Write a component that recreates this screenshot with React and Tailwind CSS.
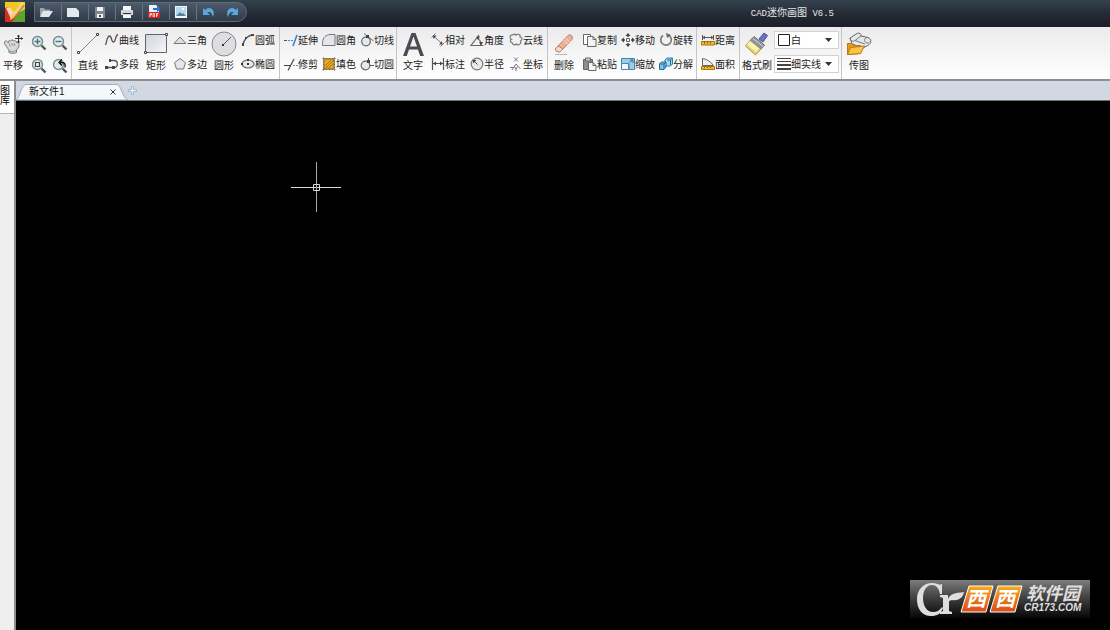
import { useState } from 'react';

const font = "font-['Liberation_Sans','Noto_Sans_CJK_SC',sans-serif]";

function Svg({ w = 14, h = 14, children }) {
  return (
    <svg
      width={w}
      height={h}
      viewBox={`0 0 ${w} ${h}`}
      fill="none"
      stroke="#666"
      strokeWidth="1"
      className="shrink-0"
      aria-hidden="true"
    >
      {children}
    </svg>
  );
}

function Magnifier({ children }) {
  return (
    <Svg w={16} h={16}>
      <path d="M10.5 10.5l4 4" stroke="#555" strokeWidth="2.4" />
      <circle cx="6.5" cy="6.5" r="5" fill="#dcecef" stroke="#7b8a8e" strokeWidth="1.4" />
      {children}
    </Svg>
  );
}

const icons = {
  pan: (
    <Svg w={20} h={20}>
      <path d="M1.500 8c1-2 3-1 4 1C5 7 6 6 7.500 7 8 5.500 10 5.500 10.500 7c1.500-1 3 0 3 1.500 1.500-.5 2.500.5 2.500 2 0 3-1.500 4.500-2.500 5.500v2.500c-2.500 1.200-5.500 1-7.500 0V17c-1-2-1.500-3.500-3-5-1-1-1.500-2.500-1.500-4z" fill="#d5dada" stroke="#777" />
      <path d="M6 9.500l1.500 3M8.500 9l1.500 3M11 9l1 3M6.500 17c2 .8 4.500.8 6.500-.5" stroke="#909797" />
      <path d="M15.500 1v7.500M12 4.500h7.500M14.500 2.500l1-1.500 1 1.500M18 3.500l1.500 1-1.500 1M14.500 7.500l1 1.500 1-1.500" stroke="#333" />
    </Svg>
  ),
  zoomIn: <Magnifier><path d="M6.500 3.500v6M3.500 6.500h6" stroke="#4a7683" strokeWidth="1.4" /></Magnifier>,
  zoomOut: <Magnifier><path d="M3.500 6.500h6" stroke="#4a7683" strokeWidth="1.4" /></Magnifier>,
  zoomWindow: <Magnifier><path d="M4.500 4.500h4v4h-4z" stroke="#444" strokeWidth="1.2" /></Magnifier>,
  zoomBack: <Magnifier><path d="M8 4.500h2c3 0 3.500 2 3 5M10 1.500L7 4.500l3 3" stroke="#111" strokeWidth="1.4" /></Magnifier>,
  line: (
    <Svg w={24} h={24}>
      <path d="M3 21L21 3" stroke="#888" />
      <path d="M1.500 19.500h2v2h-2zM20.500 1.500h2v2h-2z" fill="#fff" stroke="#444" />
    </Svg>
  ),
  curve: <Svg><path d="M.5 12C2 8 2 3 4.500 3S6 9 8.500 9 10 2 13 1.500" stroke="#555" strokeWidth="1.300" /></Svg>,
  polyline: (
    <Svg>
      <path d="M5 3.500h4c4.500 0 4.500 7 0 7H1" stroke="#555" strokeWidth="1.300" />
      <path d="M0 9h3v3H0zM7 9h3v3H7zM4 2h2v3H4z" fill="#444" stroke="none" />
    </Svg>
  ),
  rect: (
    <Svg w={24} h={22}>
      <defs>
        <linearGradient id="rectFill" x1="0" y1="0" x2="1" y2="1">
          <stop offset="0" stopColor="#cfd4dd" />
          <stop offset="1" stopColor="#f4f6f9" />
        </linearGradient>
      </defs>
      <path d="M1.500 1.500h21v18h-21z" fill="url(#rectFill)" stroke="#666" />
      <path d="M.5 18.500h2v2h-2zM21.500.500h2v2h-2z" fill="#fff" stroke="#444" />
    </Svg>
  ),
  triangle: <Svg><path d="M1 10.500h12L7 4z" fill="#dde1e6" stroke="#777" /></Svg>,
  polygon: <Svg><path d="M7 1.500l5.500 4.200-2 6.300h-7l-2-6.300z" fill="#e3e6ea" stroke="#777" /></Svg>,
  circle: (
    <Svg w={26} h={26}>
      <circle cx="13" cy="13" r="12" fill="#dcdee1" stroke="#888" />
      <path d="M12 14l8-8" stroke="#555" />
      <path d="M11 13h2v2h-2z" fill="#333" stroke="none" />
    </Svg>
  ),
  arc: (
    <Svg>
      <path d="M2 12C3 6 7 2 12 2" stroke="#555" strokeWidth="1.300" />
      <path d="M1 10h2v3H1zM10 1h3v2h-3zM4 4h2v2H4z" fill="#444" stroke="none" />
    </Svg>
  ),
  ellipse: (
    <Svg>
      <ellipse cx="7" cy="7" rx="6" ry="4" fill="#e6e8eb" strokeWidth="1.200" />
      <path d="M6 6h2v2H6zM6 2h2v2H6zM0 6h2v2H0z" fill="#333" stroke="none" />
    </Svg>
  ),
  extend: (
    <Svg>
      <path d="M0 7.500h3" stroke="#555" />
      <path d="M4 7.500h5" stroke="#3f8fd8" strokeDasharray="2 1" />
      <path d="M9 13L13 2" stroke="#2b83d6" strokeWidth="1.500" />
    </Svg>
  ),
  trim: (
    <Svg>
      <path d="M0 8.500h6M4 13.500L10 2" stroke="#444" strokeWidth="1.200" />
      <path d="M9 8.500h5" stroke="#888" strokeDasharray="2 1" />
    </Svg>
  ),
  fillet: <Svg><path d="M.5 12.500V9.500C1 4 4 2 8 1.500h5v11z" fill="#e3e6ea" stroke="#777" /></Svg>,
  fill: (
    <Svg>
      <path d="M2 2h10v10H2z" fill="#e8a91f" stroke="#9a7018" />
      <path d="M3 9l6-6M3 12l9-9M6 12l6-6" stroke="#a3761a" />
      <path d="M.5 1.500h13M.5 12.500h13M1.500.500v13M12.500.500v13" stroke="#666" strokeDasharray="2 1" />
    </Svg>
  ),
  tangentLine: (
    <Svg>
      <circle cx="6" cy="8.500" r="4.300" fill="#e6e9ec" stroke="#666" strokeWidth="1.200" />
      <path d="M4 .5l9.500 7.500" stroke="#666" />
      <path d="M6 2h3v3H6z" fill="#444" stroke="none" />
    </Svg>
  ),
  tangentCircle: (
    <Svg>
      <circle cx="5.500" cy="8.500" r="4.300" fill="#e6e9ec" stroke="#666" strokeWidth="1.200" />
      <path d="M8.500 1v5M10 8.500h4" stroke="#555" />
      <path d="M7 3h3v3H7z" fill="#444" stroke="none" />
    </Svg>
  ),
  text: (
    <Svg w={22} h={26}>
      <path d="M1 25L9.500 2h4L22 25h-3.800l-2.300-6.500H7L4.800 25zM8 15.500h7L11.500 5.500z" fill="#4a4d52" stroke="none" />
    </Svg>
  ),
  relative: (
    <Svg>
      <path d="M.5 4.500l4-4M9.500 13.500l4-4M3 3.500l8 7" stroke="#777" />
      <path d="M2 2.500h3.500L2.500 6zM11.500 11.500H8l3-3.500z" fill="#444" stroke="none" />
    </Svg>
  ),
  dimension: (
    <Svg>
      <path d="M1.500 1v12M12.500 1v12M2 6.500h10" stroke="#555" strokeWidth="1.200" />
      <path d="M2 6.500l3-2v4zM12 6.500l-3-2v4z" fill="#444" stroke="none" />
    </Svg>
  ),
  angle: (
    <Svg>
      <path d="M13.500 12.500H1L9 2M7 5c2 1 4 4 4 7" stroke="#666" strokeWidth="1.200" />
      <path d="M6.500 3.500h3.500L8 7zM9 9h4l-2 3.500z" fill="#444" stroke="none" />
    </Svg>
  ),
  radius: (
    <Svg>
      <circle cx="7" cy="7" r="5.800" fill="#e9eaec" stroke="#777" strokeWidth="1.200" />
      <path d="M3.500 3.500l4 4" stroke="#444" />
      <path d="M3 3h3.500L3 6.500z" fill="#444" stroke="none" />
    </Svg>
  ),
  cloud: (
    <Svg>
      <path d="M4 2c1-1.500 3-1 3 0 2-1.500 5-.5 4 2 2.500 0 2.500 3 .500 4 1 3-2 5-4 3-1.500 1.500-4 1-4-1C1 10 1 7 2.500 6.500 0 5 1 1.500 4 2z" fill="#f0f1f3" stroke="#777" strokeWidth="1.200" />
    </Svg>
  ),
  coordinate: (
    <Svg>
      <path d="M5 .5l4 4M9 .5l-4 4M1 10.500h4M3 13l4-6 4.500 5M5.500 9.500L7 12v2M8.500 9.500L7 12" stroke="#777" />
    </Svg>
  ),
  erase: (
    <Svg w={22} h={24}>
      <path d="M3 16L15 3.500c2-2 6 1 4 4L8 19c-2 2-7 0-5-3z" fill="#e9b096" stroke="#b98370" />
      <path d="M3 16l2-2 5 3-2 2c-2 2-7 0-5-3z" fill="#f4ddd0" stroke="#b98370" />
      <path d="M10.500 8.500l4.500 3.500M12.500 6.500l4.500 3.500" stroke="#f8ded1" />
      <path d="M2 22.500h12" stroke="#b5b5b5" />
    </Svg>
  ),
  copy: (
    <Svg>
      <path d="M.5 1.500h7v10h-7z" fill="#fff" />
      <path d="M4.500 3.500h5.500l3 3v7H4.500z" fill="#f3f4f6" />
      <path d="M10 3.500v3h3" />
    </Svg>
  ),
  paste: (
    <Svg>
      <path d="M.5 2.500h9v10h-9z" fill="#8d8d8d" />
      <path d="M2.500 1h5v3h-5z" fill="#ccc" />
      <path d="M5.500 5.500H10L13 8.500v5H5.500z" fill="#f5f5f5" />
      <path d="M10 5.500v3h3" />
    </Svg>
  ),
  move: (
    <Svg>
      <path d="M7 2v2M7 10v2M2 7h2M10 7h2" stroke="#444" strokeWidth="1.500" />
      <path d="M5.500 5.500h3v3h-3z" />
      <path d="M7 0l2.500 3h-5zM7 14l2.500-3h-5zM0 7l3-2.500v5zM14 7l-3-2.500v5z" fill="#444" stroke="none" />
    </Svg>
  ),
  scale: (
    <Svg>
      <path d="M.5 1.500h13v11H8V6.500H.5z" fill="#9fcde3" stroke="#3f86ab" />
      <path d="M.5 6.500h7v6h-7z" fill="#f1f8fb" stroke="#4a88a8" />
      <path d="M8.500 5.500l3-2.500M9 3h3v3" stroke="#2b729b" />
    </Svg>
  ),
  rotate: (
    <Svg>
      <path d="M4 2.500A5.300 5.300 0 1 0 10.500 2.800" stroke="#777" strokeWidth="1.600" />
      <path d="M7 0l1 5 4-3z" fill="#666" stroke="none" />
    </Svg>
  ),
  explode: (
    <Svg>
      <path d="M6 3l2-2h5.500v6l-2 2H6z" fill="#a8d8ef" stroke="#2b7fae" />
      <path d="M.5 7l2-2H7v5l-2 2.500H.5z" fill="#7cc1e6" stroke="#226f9e" />
      <path d="M.5 7H5v5M5 7l2-2M8 3h3.500v5M11.500 3l2-2" stroke="#226f9e" />
    </Svg>
  ),
  distance: (
    <Svg>
      <path d="M1 4.500h12M1.500 2v5M12.500 2v5M4 3L2 4.500 4 6M10 3l2 1.500L10 6" stroke="#555" />
      <path d="M.5 8.500h13v3.500H.500z" fill="#f3b82d" stroke="#a87510" />
      <path d="M3.500 9v1.500M6.500 9v1.500M9.500 9v1.500" stroke="#7a560f" />
    </Svg>
  ),
  area: (
    <Svg>
      <path d="M1.500 8.500v-7C6 2 10 5 12.500 8.500z" fill="#eceef1" />
      <path d="M.5 9.500h13v3H.500z" fill="#f3b82d" stroke="#a87510" />
      <path d="M3.500 10v1M6.500 10v1M9.500 10v1" stroke="#7a560f" />
    </Svg>
  ),
  brush: (
    <Svg w={24} h={24}>
      <path d="M14 7l5-6 3.500 2.500L18 10z" fill="#6a72c4" stroke="#4c5596" />
      <path d="M9 4.500L19.500 13 16 17 5 8.500z" fill="#8f949c" stroke="#6b6f76" />
      <path d="M8 6.500L18 14.500" stroke="#d5d8dd" />
      <path d="M5 8.500L16 17l-5.500 6L.5 14z" fill="#ead65f" stroke="#a79a4f" />
      <path d="M5 9l9 7.500-3 3.500-9-7.500z" fill="#f8f2bd" stroke="none" />
    </Svg>
  ),
  transfer: (
    <Svg w={26} h={24}>
      <path d="M4 6l7-4.500c2-1 4.500 0 4 2.500l7 1.500c4 1.500 3.500 6 .5 7.500L17 16 6 12z" fill="#e6e9ec" stroke="#666" />
      <path d="M4 6c0 3 3 4 5 2.500L15 4M22 5.500c-3 0-4 2-3 4s3 2 4.500.5M9 8.500L19 12" stroke="#777" />
      <path d="M1.500 11.500h4l2 2h7v8l-13 1z" fill="#e79a16" stroke="#b67a17" />
      <path d="M4.500 15.500L18.500 14l-4 7.500-13 1z" fill="#fbc443" stroke="#b67a17" />
    </Svg>
  ),
};

const quickActions = [
  ['打开', <><path d="M1 11V3h4l1 1.500h5V6" fill="#9aa3ad" /><path d="M1 12l3-6h10l-4 6z" fill="#dfe5e9" /></>],
  ['新建', <path d="M1 3h9l3 3v6H1z" fill="#e4e9ed" />],
  ['保存', <><path d="M2 2h10v11H2z" fill="#7f8890" /><path d="M4 2h6v4H4zM4 9h6v4H4z" fill="#eef2f5" /><path d="M6 10h2v2H6z" fill="#444" /></>],
  ['打印', <><path d="M3 1h8v4H3zM3 9h8v4H3z" fill="#f4f6f8" /><path d="M1 5h12v5H1z" fill="#cfd5da" /><path d="M3 8h8v1H3z" fill="#333" /></>],
  ['PDF', <><path d="M2 0h7l3 3v10H2z" fill="#edf1f5" /><path d="M6 3h4V1l4 3-4 3V5H6z" fill="#2576c9" /><path d="M1 7h12v6H1z" fill="#cf2823" /><path d="M3 12V8.500h1.500v1.500H3M6 8.500v3h1.500v-3zM9.500 12V8.500h2M9.500 10h1.500" stroke="#fff" strokeWidth=".8" /></>],
  ['图片', <><path d="M1 1h12v12H1z" fill="#f2f6f9" /><path d="M2 2h10v9H2z" fill="#b5d9ea" /><path d="M2 11l4-4 2 2 1-1 3 3z" fill="#577e97" /><path d="M8 3h2v2H8z" fill="#fff" /></>],
  ['撤销', <path d="M1 3v7h7L5.500 7.500C8 6 10 8 11 12c2-5 0-9-4-9-2 0-3 1-4 2z" fill="#5aa7dc" />],
  ['重做', <path d="M13 3v7H6l2.500-2.500C6 6 4 8 3 12 1 7 3 3 7 3c2 0 3 1 4 2z" fill="#5aa7dc" />],
];

function BigButton({ icon, label }) {
  return (
    <button className="flex w-8 shrink-0 flex-col items-center">
      <span className="flex h-8 items-center">{icons[icon]}</span>
      <span className="h-4 text-[10px] leading-3 whitespace-nowrap">{label}</span>
    </button>
  );
}

function SmallButtons({ items }) {
  return (
    <div className="flex shrink-0 flex-col">
      {items.map(([icon, label]) => (
        <button key={icon} className="flex h-6 items-center text-[10px] whitespace-nowrap">
          {icons[icon]}
          {label}
        </button>
      ))}
    </div>
  );
}

function Group({ className = '', children }) {
  return (
    <div className={`flex shrink-0 border-r border-[#c4c4c4] pt-px ${className}`}>{children}</div>
  );
}

function IconSelect({ label, value, onChange, options, children }) {
  return (
    <label className="relative flex h-[18px] w-[65px] items-center border border-[#d2d2d2] bg-white">
      <span className="pointer-events-none absolute left-0.5">{children}</span>
      <select
        aria-label={label}
        value={value}
        onChange={(e) => onChange(e.target.value)}
        className="h-4 w-full appearance-none bg-transparent pl-4 text-[10px] outline-none"
      >
        {options.map((o) => (
          <option key={o}>{o}</option>
        ))}
      </select>
      <svg width="7" height="4" className="pointer-events-none absolute right-1.5" aria-hidden="true">
        <path d="M0 0h7L3.500 4z" fill="#333" />
      </svg>
    </label>
  );
}

function TitleBar() {
  return (
    <header className="flex h-[27px] items-start bg-linear-to-b from-[#33434d] via-[#252b36] to-[#1b1d28]">
      <svg width="20" height="20" viewBox="0 0 20 20" className="mt-0.5 ml-[5px]" aria-hidden="true">
        <path d="M0 0h20v20H0z" fill="#d92c1f" />
        <path d="M0 0h20v5L9 13 4 5 0 6z" fill="#f4c51f" />
        <path d="M20 4v16H7z" fill="#5aa52c" />
        <path d="M13 0h7v7l-5 3z" fill="#e8d83a" />
        <path d="M1 6l4-1 4 6-3 6z" fill="#f3d9b8" />
        <path d="M17 1l3 3L9 16l-4 2 1-5z" fill="#f6d08c" />
        <path d="M18.500 2.500L20 4 9 16l-2 1z" fill="#cf8a3c" />
      </svg>
      <div className="mt-0.5 ml-[9px] flex h-5 w-[213px] items-center rounded-r-full border border-[#5d6b7a] bg-linear-to-b from-[#4d5b6b] to-[#313b49]">
        {quickActions.map(([label, drawing], i) => (
          <button
            key={label}
            aria-label={label}
            className={`flex h-4 items-center ${i < 6 ? 'w-[27px] border-r border-[#68737f] pl-1' : 'w-[23px] justify-center'}`}
          >
            <svg width="14" height="14" viewBox="0 0 14 14" fill="none" aria-hidden="true">
              {drawing}
            </svg>
          </button>
        ))}
      </div>
      <h1 className="mt-[7px] mr-[276px] ml-auto text-[10px] leading-3 text-[#e4e7ea]">
        <span className="font-['Liberation_Mono',monospace] text-[9px]">CAD</span>
        迷你画图
        <span className="font-['Liberation_Mono',monospace] text-[9px]"> V6.5</span>
      </h1>
    </header>
  );
}

function Toolbar() {
  const [color, setColor] = useState('白');
  const [lineType, setLineType] = useState('细实线');

  return (
    <nav className="flex h-[54px] border-b-2 border-[#8b8e92] bg-linear-to-b from-[#ebebeb] to-white text-[#222]">
      <Group className="w-[72px]">
        <div className="-ml-[3px] flex">
          <BigButton icon="pan" label="平移" />
        </div>
        <div className="grid grid-cols-2 content-start gap-x-[5px] pl-0.5">
          {['zoomIn', 'zoomOut', 'zoomWindow', 'zoomBack'].map((name) => (
            <button key={name} aria-label={name} className="flex h-[23px] items-end">
              {icons[name]}
            </button>
          ))}
        </div>
      </Group>
      <Group className="w-[208px] gap-px">
        <BigButton icon="line" label="直线" />
        <SmallButtons items={[['curve', '曲线'], ['polyline', '多段']]} />
        <BigButton icon="rect" label="矩形" />
        <SmallButtons items={[['triangle', '三角'], ['polygon', '多边']]} />
        <BigButton icon="circle" label="圆形" />
        <SmallButtons items={[['arc', '圆弧'], ['ellipse', '椭圆']]} />
      </Group>
      <Group className="w-[117px] gap-1 pl-1">
        <SmallButtons items={[['extend', '延伸'], ['trim', '修剪']]} />
        <SmallButtons items={[['fillet', '圆角'], ['fill', '填色']]} />
        <SmallButtons items={[['tangentLine', '切线'], ['tangentCircle', '切圆']]} />
      </Group>
      <Group className="w-[151px]">
        <BigButton icon="text" label="文字" />
        <div className="flex gap-[5px] pl-0.5">
          <SmallButtons items={[['relative', '相对'], ['dimension', '标注']]} />
          <SmallButtons items={[['angle', '角度'], ['radius', '半径']]} />
          <SmallButtons items={[['cloud', '云线'], ['coordinate', '坐标']]} />
        </div>
      </Group>
      <Group className="w-[149px]">
        <BigButton icon="erase" label="删除" />
        <div className="flex gap-1 pl-[3px]">
          <SmallButtons items={[['copy', '复制'], ['paste', '粘贴']]} />
          <SmallButtons items={[['move', '移动'], ['scale', '缩放']]} />
          <SmallButtons items={[['rotate', '旋转'], ['explode', '分解']]} />
        </div>
      </Group>
      <Group className="w-[43px] pl-1">
        <SmallButtons items={[['distance', '距离'], ['area', '面积']]} />
      </Group>
      <Group className="w-[102px] gap-px pl-px">
        <BigButton icon="brush" label="格式刷" />
        <div className="flex flex-col gap-1.5 pt-[3px]">
          <IconSelect label="颜色" value={color} onChange={setColor} options={['白', '红', '黄', '绿']}>
            <Svg><path d="M1.500 1.500h11v11h-11z" fill="#fff" stroke="#222" /></Svg>
          </IconSelect>
          <IconSelect label="线型" value={lineType} onChange={setLineType} options={['细实线', '粗实线', '虚线']}>
            <Svg>
              <path d="M0 1.500h14" stroke="#444" />
              <path d="M0 4.500h14" stroke="#444" />
              <path d="M0 8h14" stroke="#444" strokeWidth="2" />
              <path d="M0 12h14" stroke="#444" strokeWidth="2" />
            </Svg>
          </IconSelect>
        </div>
      </Group>
      <div className="flex pt-px pl-px">
        <BigButton icon="transfer" label="传图" />
      </div>
    </nav>
  );
}

function TabBar() {
  return (
    <div className="flex h-5 items-end border-b border-[#6c7178] bg-[#d1d8e2]">
      <div className="relative flex h-4 w-28 items-center justify-between pr-3 pl-[13px] text-[10px] text-[#111]">
        <svg viewBox="0 0 112 16" preserveAspectRatio="none" className="absolute inset-0 size-full" aria-hidden="true">
          <path d="M0 16C4 14 5 1 10 .5h91c4 0 5 13 11 15.500z" fill="#f4f7fb" stroke="#a3abb6" />
        </svg>
        <button className="relative leading-3">新文件1</button>
        <button aria-label="关闭" className="relative">
          <svg width="6" height="6" viewBox="0 0 6 6" stroke="#333"><path d="M.5.500l5 5M5.500.500l-5 5" /></svg>
        </button>
      </div>
      <button aria-label="新标签" className="mb-[5px]">
        <svg width="9" height="9" viewBox="0 0 9 9" fill="#eef5fc" stroke="#9db8d1">
          <path d="M3.500.500h2v3h3v2h-3v3h-2v-3h-3v-2h3z" />
        </svg>
      </button>
    </div>
  );
}

function Watermark() {
  return (
    <div className="mr-5 mb-3 flex h-[38px] w-[180px] items-center bg-linear-to-b from-[#7c7c7c] to-[#080808] pl-[5px]">
      <svg width="49" height="36" viewBox="0 0 49 36" fill="#dedede" aria-hidden="true">
        <path d="M27 3v10h-2C24 7 21 4 17 4c-6 0-9 6-9 13 0 8 4 14 10 14 4 0 7-2 9-5l1 1c-2 6-6 8-12 8C7 35 2 28 2 18 2 9 8 2 17 2c4 0 6 1 8 2l1-1z" />
        <path d="M25 14h8v4c2-5 7-6 16-7-1 6-6 9-12 8l-3 1v10l3 1v2H25v-2l3-1V17l-3-1z" />
      </svg>
      <svg width="64" height="34" viewBox="0 0 64 34" className="-ml-1 overflow-visible" aria-hidden="true">
        <defs>
          <linearGradient id="orange" x1="0" y1="0" x2="0" y2="1">
            <stop offset="0" stopColor="#f7ab20" />
            <stop offset="1" stopColor="#dc4a17" />
          </linearGradient>
        </defs>
        <path d="M9 4h24l-7 26H1zM38 4h24l-7 26H30z" fill="url(#orange)" stroke="#fff" />
        <g fill="#fff" fontSize="20" fontWeight="700" fontStyle="italic" fontFamily="Noto Sans CJK SC, sans-serif">
          <text x="6" y="24">西</text>
          <text x="35" y="24">西</text>
        </g>
      </svg>
      <div className="font-bold text-[#dedede] italic">
        <div className="pl-0.5 text-[18px] leading-[18px] whitespace-nowrap">软件园</div>
        <div className="text-[10px] leading-[10px]">CR173.COM</div>
      </div>
    </div>
  );
}

export default function App() {
  return (
    <div className={`flex h-screen flex-col overflow-hidden bg-black ${font}`}>
      <TitleBar />
      <Toolbar />
      <div className="flex min-h-0 flex-1">
        <aside className="w-4 shrink-0 border-r-2 border-[#8a8d91] bg-[#efefef]">
          <button className="flex h-[33px] w-full flex-col items-start border-b border-[#b5b5b5] bg-white pt-[5px] text-[10px] leading-[10px] text-black">
            <span>图</span>
            <span>库</span>
          </button>
        </aside>
        <div className="flex min-w-0 flex-1 flex-col">
          <TabBar />
          <main className="relative flex flex-1 items-end justify-end bg-black">
            <svg width="50" height="50" viewBox="0 0 50 50" fill="none" className="absolute top-[61px] left-[275px]" aria-label="光标">
              <path d="M0 25.500h50" stroke="#d8d8d8" />
              <path d="M25.500 0v50" stroke="#a8a8a8" />
              <path d="M22.500 22.500h6v6h-6z" stroke="#d8d8d8" />
            </svg>
            <Watermark />
          </main>
        </div>
      </div>
    </div>
  );
}
